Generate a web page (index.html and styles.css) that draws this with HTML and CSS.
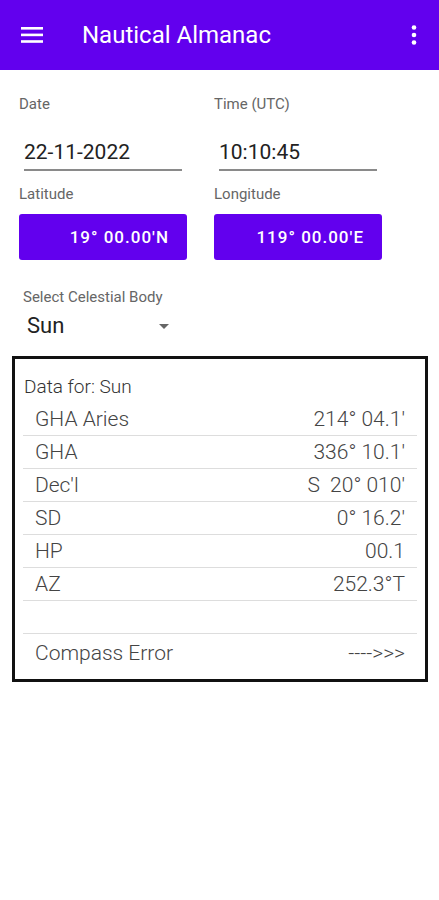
FILE: index.html
```html
<!DOCTYPE html>
<html lang="en">
<head>
  <meta charset="UTF-8" />
  <meta name="viewport" content="width=device-width, initial-scale=1" />
  <title>Nautical Almanac</title>
  <link rel="stylesheet" href="styles.css">
</head>
<body>
  <header class="appbar">
    <svg class="menu-icon" width="22" height="16" viewBox="0 0 22 16">
      <rect x="0" y="0" width="22" height="2.6" fill="#fff"/>
      <rect x="0" y="6.6" width="22" height="2.6" fill="#fff"/>
      <rect x="0" y="13.2" width="22" height="2.6" fill="#fff"/>
    </svg>
    <h1>Nautical Almanac</h1>
    <svg class="more-icon" width="6" height="20" viewBox="0 0 6 20">
      <circle cx="3" cy="2.5" r="2.3" fill="#fff"/>
      <circle cx="3" cy="10" r="2.3" fill="#fff"/>
      <circle cx="3" cy="17.5" r="2.3" fill="#fff"/>
    </svg>
  </header>

  <main>
    <div class="fields">
      <div class="field">
        <label>Date</label>
        <div class="input">22-11-2022</div>
      </div>
      <div class="field">
        <label>Time (UTC)</label>
        <div class="input">10:10:45</div>
      </div>
      <div class="field">
        <label>Latitude</label>
        <button class="coord">19° 00.00'N</button>
      </div>
      <div class="field">
        <label>Longitude</label>
        <button class="coord">119° 00.00'E</button>
      </div>
    </div>

    <div class="select">
      <label>Select Celestial Body</label>
      <div class="select-value">
        <span>Sun</span>
        <span class="arrow"></span>
      </div>
    </div>

    <section class="data-box">
      <h2>Data for: Sun</h2>
      <div class="row"><span>GHA Aries</span><span>214° 04.1'</span></div>
      <div class="row"><span>GHA</span><span>336° 10.1'</span></div>
      <div class="row"><span>Dec'l</span><span>S&nbsp;&nbsp;20° 010'</span></div>
      <div class="row"><span>SD</span><span>0° 16.2'</span></div>
      <div class="row"><span>HP</span><span>00.1</span></div>
      <div class="row"><span>AZ</span><span>252.3°T</span></div>
      <div class="row"></div>
      <div class="row last"><span>Compass Error</span><span>----&gt;&gt;&gt;</span></div>
    </section>
  </main>
</body>
</html>
```

FILE: styles.css
```css
body {
  font-family: Roboto, "Noto Sans", sans-serif;
  background: #fff;
  margin: 0;
  padding: 0;
}
.appbar {
  background: #6200ee;
  color: white;
  height: 70px;
  display: flex;
  align-items: center;
  padding: 0 22px 0 21px;
}
.menu-icon {
  flex: none;
}
.appbar h1 {
  flex: 1;
  margin: 0 0 0 39px;
  font-size: 24px;
  font-weight: 400;
}
.more-icon {
  flex: none;
}
main {
  padding: 0 11px 0 12px;
}
.fields {
  display: grid;
  grid-template-columns: 168px 168px;
  column-gap: 27px;
  padding: 25px 0 0 7px;
}
.field label {
  display: block;
  font-size: 15px;
  line-height: 18px;
  color: #666;
}
.field .input {
  margin: 27px 0 0 5px;
  padding-bottom: 5px;
  border-bottom: 2px solid #8a8a8a;
  font-size: 21px;
  line-height: 24px;
  color: #222;
  width: 158px;
}
.field:nth-child(3), .field:nth-child(4) {
  margin-top: 14px;
}
.field .coord {
  margin-top: 11px;
  width: 168px;
  height: 46px;
  background: #6200ee;
  color: white;
  border: none;
  border-radius: 3px;
  font-family: Roboto, sans-serif;
  font-size: 17px;
  font-weight: 500;
  letter-spacing: 1px;
  padding: 0 18px 0 0;
  text-align: right;
}
.select {
  margin: 28px 0 0 11px;
}
.select label {
  display: block;
  font-size: 15px;
  line-height: 18px;
  color: #666;
}
.select-value {
  display: flex;
  align-items: center;
  width: 142px;
  justify-content: space-between;
  padding-left: 4px;
  margin-top: 6px;
  font-size: 22px;
  line-height: 28px;
  color: #222;
}
.arrow {
  width: 0;
  height: 0;
  border-left: 5px solid transparent;
  border-right: 5px solid transparent;
  border-top: 5px solid #666;
}
.data-box {
  margin-top: 16px;
  border: 3px solid #111;
  padding: 0 8px 8px 8px;
}
.data-box h2 {
  margin: 16px 0 4px 1px;
  font-size: 19px;
  line-height: 24px;
  font-weight: 300;
  color: #333;
}
.row {
  display: flex;
  justify-content: space-between;
  align-items: center;
  height: 32px;
  padding: 0 12px;
  border-bottom: 1px solid #ddd;
  font-size: 21px;
  font-weight: 300;
  color: #444;
}
.row.last {
  height: 37px;
  border-bottom: none;
}
```
